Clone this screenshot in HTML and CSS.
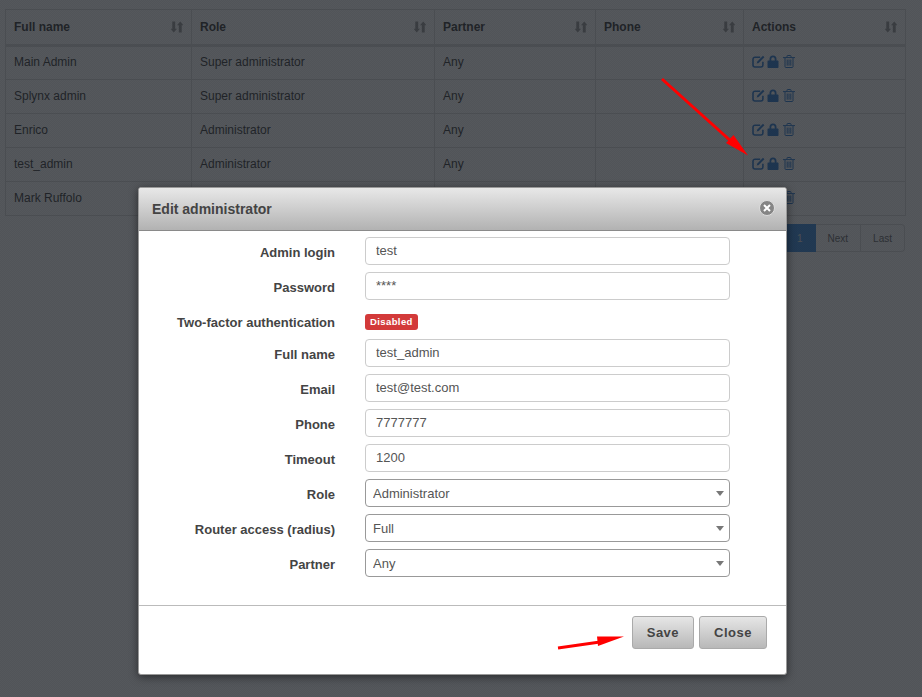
FILE: index.html
```html
<!doctype html>
<html lang="en">
<head>
	<meta charset="UTF-8">
	<title>Administrators</title>
	<link rel="stylesheet" href="styles.css">
</head>
<body>
	<svg class="defs" width="0" height="0">
		<symbol id="i-sort" viewBox="0 0 14 14">
			<path d="M1.500 .5h3.400v8.500h2.100L3.200 13.500-.6 9h2.100zM9.100 13.500h3.400V5h2.100L10.800 .5 7 5h2.100z"/>
		</symbol>
		<symbol id="i-edit" viewBox="0 0 13 13">
			<path d="M8.200 2.200H3a2 2 0 0 0-2 2V10a2 2 0 0 0 2 2h5.900a2 2 0 0 0 2-2V6.800" fill="none" stroke="currentColor" stroke-width="1.600"/>
			<path d="M11 .8l1.400 1.400-5.700 5.700-2 .6.600-2z"/>
		</symbol>
		<symbol id="i-lock" viewBox="0 0 12 13">
			<path d="M2.500 5.500V4a3.500 3.500 0 0 1 7 0v1.500h1.200a.8.800 0 0 1 .8.800v5.900a.8.800 0 0 1-.8.800H1.300a.8.800 0 0 1-.8-.8V6.300a.8.800 0 0 1 .8-.8zM4.300 5.500h3.400V4a1.700 1.700 0 0 0-3.400 0z" fill-rule="evenodd"/>
		</symbol>
		<symbol id="i-trash" viewBox="0 0 12 13">
			<path d="M0 2.600h12M2 3v8.800c0 .5.400.7.800.7h6.400c.4 0 .8-.2.800-.7V3M4 2.400V1.100c0-.3.200-.6.600-.6h2.800c.4 0 .6.300.6.600v1.300M4.200 4.500v6.200M6 4.500v6.200M7.800 4.500v6.200" fill="none" stroke="currentColor"/>
		</symbol>
	</svg>

	<div class="page">
		<table class="grid">
			<thead>
				<tr>
					<th class="col-name">Full name<svg class="sort"><use href="#i-sort"/></svg></th>
					<th class="col-role">Role<svg class="sort"><use href="#i-sort"/></svg></th>
					<th class="col-partner">Partner<svg class="sort"><use href="#i-sort"/></svg></th>
					<th class="col-phone">Phone<svg class="sort"><use href="#i-sort"/></svg></th>
					<th class="col-actions">Actions<svg class="sort"><use href="#i-sort"/></svg></th>
				</tr>
			</thead>
			<tbody>
				<tr>
					<td>Main Admin</td><td>Super administrator</td><td>Any</td><td></td>
					<td class="actions"><svg class="ico-edit"><use href="#i-edit"/></svg><svg class="ico-lock"><use href="#i-lock"/></svg><svg class="ico-trash"><use href="#i-trash"/></svg></td>
				</tr>
				<tr>
					<td>Splynx admin</td><td>Super administrator</td><td>Any</td><td></td>
					<td class="actions"><svg class="ico-edit"><use href="#i-edit"/></svg><svg class="ico-lock"><use href="#i-lock"/></svg><svg class="ico-trash"><use href="#i-trash"/></svg></td>
				</tr>
				<tr>
					<td>Enrico</td><td>Administrator</td><td>Any</td><td></td>
					<td class="actions"><svg class="ico-edit"><use href="#i-edit"/></svg><svg class="ico-lock"><use href="#i-lock"/></svg><svg class="ico-trash"><use href="#i-trash"/></svg></td>
				</tr>
				<tr>
					<td>test_admin</td><td>Administrator</td><td>Any</td><td></td>
					<td class="actions"><svg class="ico-edit"><use href="#i-edit"/></svg><svg class="ico-lock"><use href="#i-lock"/></svg><svg class="ico-trash"><use href="#i-trash"/></svg></td>
				</tr>
				<tr>
					<td>Mark Ruffolo</td><td></td><td></td><td></td>
					<td class="actions"><svg class="ico-edit"><use href="#i-edit"/></svg><svg class="ico-lock"><use href="#i-lock"/></svg><svg class="ico-trash"><use href="#i-trash"/></svg></td>
				</tr>
			</tbody>
		</table>
		<ul class="pager">
			<li class="selected">1</li>
			<li>Next</li>
			<li>Last</li>
		</ul>
	</div>

	<div class="backdrop"></div>

	<div class="modal">
		<div class="modal-head">
			<h3>Edit administrator</h3>
			<span class="close-x"><svg width="8" height="8" viewBox="0 0 8 8"><path d="M1 1l6 6M7 1L1 7" stroke="#fff" stroke-width="2"/></svg></span>
		</div>
		<form class="modal-body">
			<div class="row"><label>Admin login</label><input type="text" value="test"></div>
			<div class="row"><label>Password</label><input type="text" value="****"></div>
			<div class="row row-short"><label>Two-factor authentication</label><span class="badge">Disabled</span></div>
			<div class="row"><label>Full name</label><input type="text" value="test_admin"></div>
			<div class="row"><label>Email</label><input type="text" value="test@test.com"></div>
			<div class="row"><label>Phone</label><input type="text" value="7777777"></div>
			<div class="row"><label>Timeout</label><input type="text" value="1200"></div>
			<div class="row"><label>Role</label><span class="pick"><select><option>Administrator</option></select></span></div>
			<div class="row"><label>Router access (radius)</label><span class="pick"><select><option>Full</option></select></span></div>
			<div class="row"><label>Partner</label><span class="pick"><select><option>Any</option></select></span></div>
		</form>
		<div class="modal-foot">
			<button type="button">Save</button>
			<button type="button">Close</button>
		</div>
	</div>

	<svg class="arrows" width="922" height="697" viewBox="0 0 922 697">
		<path d="M662 79L733 143" stroke="#f00" stroke-width="3" fill="none"/>
		<path d="M748 155.500L726 143 733.500 135z" fill="#f00"/>
		<path d="M558 648L600 642" stroke="#f00" stroke-width="3" fill="none"/>
		<path d="M624 636.500L598 646 597 636.500z" fill="#f00"/>
	</svg>
</body>
</html>
```

FILE: styles.css
```css
*{
	margin: 0;
	padding: 0;
	box-sizing: border-box;
}

html, body{
	height: 697px;
	overflow: hidden;
}

body{
	background-color: #fff;
	color: #333;
	font-family: "Liberation Sans", Arial, sans-serif;
	font-size: 12px;
}

li{
	list-style: none;
}

.defs{
	display: block;
	height: 0;
}

.page{
	padding: 9px 17px 0 5px;
}

/* table */
.grid{
	width: 900px;
	table-layout: fixed;
	border-collapse: collapse;
	border: 1px solid #ddd;
}

.grid th, .grid td{
	border: 1px solid #ddd;
	padding: 0 8px 2px;
	height: 34px;
	text-align: left;
	vertical-align: middle;
}

.grid th{
	position: relative;
	height: 36px;
	border-bottom-width: 3px;
	padding-bottom: 0;
	font-weight: bold;
}

.col-name{
	width: 186px;
}

.col-role{
	width: 243px;
}

.col-partner{
	width: 161px;
}

.col-phone{
	width: 148px;
}

.col-actions{
	width: 162px;
}

.sort{
	position: absolute;
	right: 8px;
	top: 10px;
	width: 12px;
	height: 14px;
	fill: #999;
}

.actions{
	color: #2878d0;
	fill: #2878d0;
	white-space: nowrap;
}

.actions svg{
	display: inline-block;
	vertical-align: middle;
	margin-top: -2px;
}

.ico-edit{
	width: 13px;
	height: 13px;
	margin-right: 2px;
}

.ico-lock{
	width: 12px;
	height: 13px;
	margin-right: 4px;
}

.ico-trash{
	width: 12px;
	height: 13px;
	fill: none;
}

/* pagination */
.pager{
	display: flex;
	justify-content: flex-end;
	width: 900px;
	height: 28px;
	margin-top: 8px;
}

.pager li{
	border: 1px solid #ddd;
	border-left-width: 0;
	padding: 0 12px;
	line-height: 27px;
	font-size: 10px;
	color: #666;
}

.pager li:last-child{
	border-radius: 0 4px 4px 0;
}

.pager .selected{
	width: 40px;
	text-align: right;
	background-color: #3588dd;
	border-color: #3588dd;
	color: #ddd;
}

.backdrop{
	position: absolute;
	left: 0;
	top: 0;
	width: 922px;
	height: 697px;
	background: repeating-conic-gradient(rgba(25, 29, 35, .755) 0 25%, rgba(27, 31, 37, .745) 0 50%) 0 0 / 2px 2px;
}

/* dialog */
.modal{
	position: absolute;
	left: 138px;
	top: 187px;
	width: 649px;
	height: 488px;
	display: flex;
	flex-direction: column;
	background-color: #fff;
	border: 1px solid #999;
	border-radius: 3px;
	box-shadow: 0 2px 8px rgba(0, 0, 0, .5);
}

.modal-head{
	display: flex;
	justify-content: space-between;
	align-items: center;
	height: 43px;
	padding: 0 11px 2px 13px;
	background: linear-gradient(#e8e8e8, #b2b2b2);
	border-bottom: 1px solid #8a8a8a;
	border-radius: 2px 2px 0 0;
}

.modal-head h3{
	padding-top: 2px;
	font-size: 14px;
	color: #444;
}

.close-x{
	display: flex;
	justify-content: center;
	align-items: center;
	width: 16px;
	height: 16px;
	background-color: #858585;
	border: 1px solid #ddd;
	border-radius: 50%;
}

.modal-body{
	flex: 1;
	padding-top: 2px;
}

.row{
	display: flex;
	align-items: center;
	height: 35px;
}

.row-short{
	height: 32px;
	padding-top: 4px;
}

.row label{
	width: 196px;
	margin-right: 30px;
	padding-top: 3px;
	text-align: right;
	font-size: 13px;
	font-weight: bold;
	color: #444;
}

.row input, .row select{
	display: block;
	width: 365px;
	height: 28px;
	background-color: #fff;
	border-radius: 4px;
	color: #555;
	font-family: "Liberation Sans", Arial, sans-serif;
	font-size: 13px;
	outline: none;
}

.row input{
	padding: 0 10px 1px;
	border: 1px solid #ccc;
}

.row select{
	padding: 1px 7px 0;
	border: 1px solid #999;
	appearance: none;
	-webkit-appearance: none;
}

.pick{
	position: relative;
	display: block;
}

.pick:after{
	content: "";
	position: absolute;
	right: 6px;
	top: 12px;
	border-top: 5px solid #777;
	border-left: 4px solid transparent;
	border-right: 4px solid transparent;
}

.badge{
	margin-top: 2px;
	padding: 2px 5px;
	background-color: #d33a3a;
	border-radius: 3px;
	color: #fff;
	font-size: 9.500px;
	font-weight: bold;
	line-height: 12px;
	letter-spacing: .4px;
}

.modal-foot{
	display: flex;
	justify-content: flex-end;
	gap: 5px;
	height: 69px;
	padding: 10px 19px 0 0;
	border-top: 1px solid #bbb;
}

.modal-foot button{
	height: 33px;
	padding: 0 14px;
	background: linear-gradient(#e6e6e6, #b8b8b8);
	border: 1px solid #aaa;
	border-radius: 3px;
	color: #444;
	font-family: "Liberation Sans", Arial, sans-serif;
	font-size: 13px;
	font-weight: bold;
	letter-spacing: .5px;
}

.arrows{
	position: absolute;
	left: 0;
	top: 0;
	pointer-events: none;
}
```
